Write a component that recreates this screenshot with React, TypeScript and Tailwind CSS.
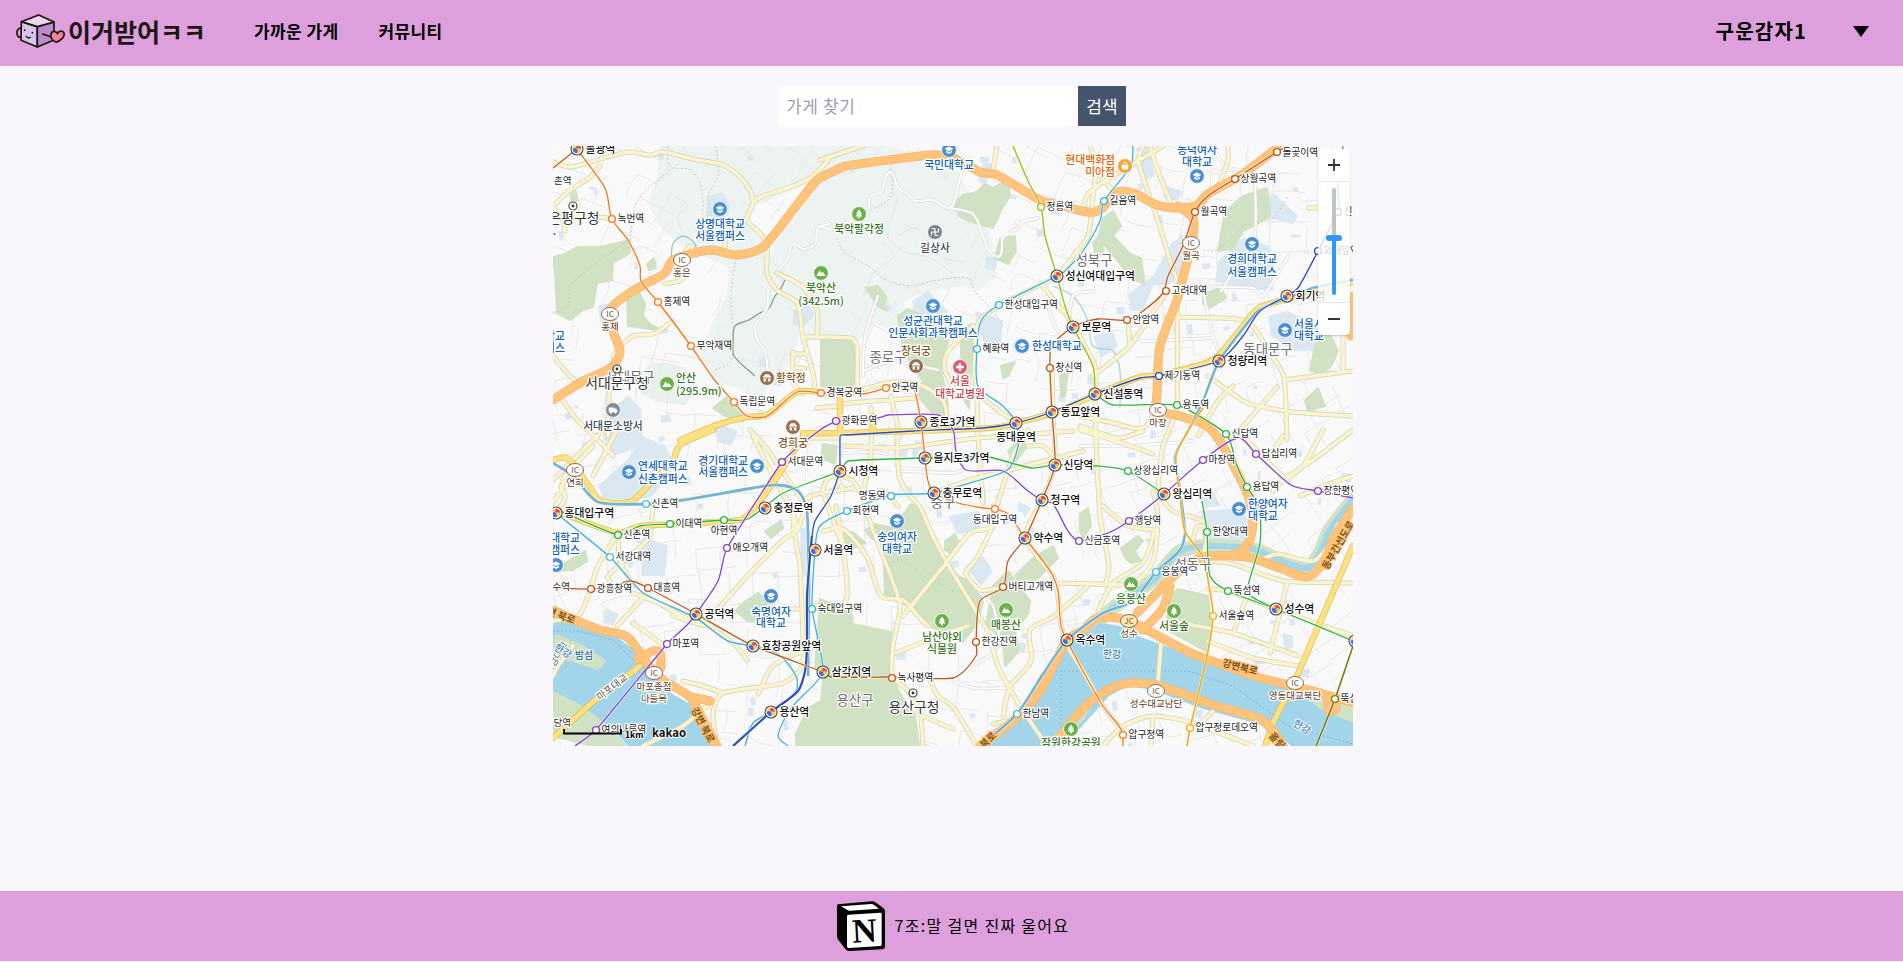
import React from 'react';

type Pt = [number, number];

const pts = (s: string): Pt[] => s.trim().split(/\s+/).map((p) => p.split(',').map(Number) as Pt);

/* Smooth curve that passes through every listed point; handles scale with the segment. */
const curve = (s: string): string => {
  const p = pts(s);
  const n = p.length;
  const dir = (i: number): Pt => {
    const a = p[Math.max(0, i - 1)];
    const b = p[Math.min(n - 1, i + 1)];
    const l = Math.hypot(b[0] - a[0], b[1] - a[1]) || 1;
    return [(b[0] - a[0]) / l, (b[1] - a[1]) / l];
  };
  let d = `M${p[0][0]} ${p[0][1]}`;
  for (let i = 0; i < n - 1; i++) {
    const b = p[i];
    const c = p[i + 1];
    const k = Math.min(9, Math.hypot(c[0] - b[0], c[1] - b[1]) * 0.28);
    const u = dir(i);
    const v = dir(i + 1);
    d += `C${(b[0] + u[0] * k).toFixed(1)} ${(b[1] + u[1] * k).toFixed(1)} ${(c[0] - v[0] * k).toFixed(1)} ${(c[1] - v[1] * k).toFixed(1)} ${c[0]} ${c[1]}`;
  }
  return d;
};

const MOUNTAINS = [
  '112,0 160,0 185,25 198,40 200,58 190,70 205,95 214,130 235,155 245,180 238,205 228,222 215,230 205,250 190,240 165,232 150,210 160,185 178,150 180,120 160,108 148,100 128,95 112,80 100,60 108,30',
  '165,0 310,0 380,14 400,26 412,48 408,62 428,72 436,100 428,120 440,128 425,140 412,136 395,138 360,146 345,156 352,172 335,178 320,172 305,190 280,190 258,186 248,158 218,120 225,100 255,60 275,30 250,35 205,55 195,30',
  '88,235 98,222 112,220 130,225 140,240 130,255 105,252 92,245',
];

const PARKS = [
  '0,111 12,108 24,101 47,101 60,98 77,94 77,107 60,117 59,134 44,137 40,161 30,164 17,174 4,167 2,127',
  '74,150 82,140 86,146 92,158 90,170 97,178 108,184 90,182 75,180',
  '18,47 23,45 25,55 18,54',
  '94,118 101,112 103,122 96,124',
  '268,194 298,192 303,200 302,225 300,246 268,240',
  '345,170 355,163 385,176 395,195 388,225 394,250 395,270 380,268 365,250 370,235 350,205',
  '402,57 410,49 424,46 432,38 440,42 455,34 457,50 448,64 440,82 415,75 406,70',
  '447,93 462,90 463,105 455,118 442,112',
  '312,142 325,140 334,152 330,160 335,165 325,160',
  '672,66 690,50 714,42 717,70 704,78 690,85 680,103 665,105',
  '545,92 550,72 560,65 568,80 560,90 577,108 588,112 592,138 577,132 565,115',
  '650,148 668,142 673,152 657,162 650,158',
  '762,200 775,185 785,205 778,220 770,227 757,225',
  '752,255 765,242 772,260 755,265',
  '330,400 318,392 312,384 322,378 340,382 358,358 368,362 375,385 390,410 405,430 423,438 430,456 424,478 410,496 400,490 380,482 360,462 332,450',
  '267,453 288,462 297,457 300,478 338,486 336,526 350,552 362,568 366,600 243,600 243,588 255,562 268,555 270,535 262,520',
  '440,440 455,425 466,440 477,455 475,468 462,485 466,505 452,520 450,495 433,478',
  '462,430 480,412 500,400 505,412 485,432 468,440',
  '182,465 190,457 205,447 216,455 222,465 212,477 195,475',
  '618,448 625,443 655,450 659,485 655,507 635,495 612,483',
  '568,402 585,390 590,395 582,405 588,415 578,417 572,412',
  '527,368 535,362 538,380 530,392 527,385',
  '160,262 175,250 190,268 190,275 172,270',
  '392,395 402,388 408,400 398,408 392,404',
  '407,185 418,178 420,190 416,262 410,252',
  '448,220 462,216 455,230 450,232',
  '507,230 515,225 512,250 508,250',
  '0,425 20,412 32,405 34,415 20,424',
  '212,385 228,375 230,382 218,392',
  '455,305 470,290 473,302 460,318',
  '540,97 548,88 550,106 543,112',
  '283,388 300,386 312,397 300,402',
  '0,555 30,565 55,585 70,600 40,600 0,590',
  '270,298 284,300 282,318 268,312',
];

const CAMPUSES = [
  '155,50 170,46 178,62 168,78 152,70',
  '45,160 57,157 66,168 62,180 48,178',
  '240,165 255,158 262,168 250,182 240,178',
  '60,262 75,250 88,262 90,300 60,310 50,290',
  '76,312 90,290 112,300 122,320 100,350 80,355 50,352 45,340',
  '359,155 375,145 395,165 385,175 362,172',
  '422,165 440,170 450,175 447,205 432,202 425,180',
  '700,50 722,48 745,70 740,78 715,72',
  '665,115 690,92 717,100 720,145 680,142 662,135',
  '620,95 633,92 632,120 618,138 600,140 590,165 577,165 575,148 600,130',
  '715,170 735,165 765,180 770,205 740,205 718,190',
  '430,15 440,18 432,40 425,35',
  '540,190 560,186 565,200 548,212',
  '648,365 690,362 700,385 690,398 650,402',
  '395,370 425,365 432,372 425,385 405,388',
  '90,390 115,400 112,430 88,430',
  '247,382 256,382 256,430 248,430',
  '583,2 596,0 602,30 592,35',
  '612,40 630,45 625,55 610,52',
  '160,275 185,285 178,300 165,296',
  '52,462 66,468 60,480 50,476',
  '412,420 430,410 440,425 428,440',
  '500,60 510,58 508,70 498,68',
  '433,110 445,112 442,125 432,122',
  '645,345 660,345 668,360 650,362',
  '730,487 740,490 740,502 731,502',
  '465,355 478,362 472,372',
];

const MINOR = [
  '267,80 280,84 290,78 305,72 315,66 317,50 328,46 337,26 345,42 355,48 362,55 380,54 397,62 405,40 410,20',
  '397,62 420,68 430,90 436,105 447,110 450,92 462,84 470,76 485,72',
  '224,127 235,112 240,98 250,103 262,98 265,82 277,78',
  '224,127 215,145 215,160 210,168 202,180 205,195 212,205 215,225',
  '660,0 672,20 700,30 702,90 690,110 668,145',
  '630,140 700,142 710,150 735,110',
  '650,145 660,190 665,205',
  '310,225 340,215 385,224',
  '310,230 312,190 325,150',
  '425,445 440,460 445,500 420,520',
  '580,190 590,195 660,192',
  '490,145 510,190 520,150 540,145',
  '400,535 420,542 455,542',
  '527,300 575,300 640,295',
  '290,307 320,306 335,308', '345,325 400,327 410,324',
];

const PALE = [
  '0,16 17,21 34,17 54,11 77,6 97,9 110,6 144,14 170,19 187,31 197,44 200,57 194,74 204,84 214,97 214,127 224,144 244,157 250,191 260,227 262,244',
  '200,55 210,50 240,40 260,30 277,12',
  '0,60 17,44 37,31 47,20', '0,67 54,72', '0,60 10,75 12,85',
  '224,127 250,141 264,164 264,191',
  '250,191 298,192 304,200 304,245',
  '240,208 252,208', '252,222 240,222', '240,206 240,236 250,248',
  '60,221 62,207 80,190 100,188 120,175',
  '62,215 56,250 55,290', '0,210 15,228 28,240', '8,252 25,275 45,294 60,310',
  '120,118 130,132 112,138', '130,110 137,100 142,108', '172,102 173,85 180,75 194,74',
  '0,334 20,314 50,284', '0,356 8,345 12,330 40,300', '64,284 40,330',
  '3,367 12,352 8,340', '65,387 67,414 80,440', '65,387 45,420 35,450 25,470 0,475',
  '60,440 55,430 95,393 100,360', '64,480 97,444', '80,477 112,500',
  '80,447 105,457 130,471 157,481 184,501 194,514',
  '143,468 157,480 120,470',
  '164,464 197,427 230,394 244,384 256,350',
  '197,284 215,304 244,347 254,361',
  '200,290 225,340 240,365 244,384',
  '164,600 160,567 170,547 230,537 250,517 247,420 240,370 258,350 300,342',
  '170,547 150,540 130,535', '205,548 220,520 250,505',
  '90,600 130,580 157,557', '20,500 5,520 0,530',
  '344,284 346,330 357,350 367,361 380,390 394,417 434,484 445,520 467,560 494,600',
  '319,284 317,317 310,350 320,384 347,457 340,500 340,530 355,545 367,567 370,600',
  '350,470 390,421 417,387 440,380 440,360',
  '412,427 427,444 450,441', '440,380 425,410 412,427',
  '424,245 425,290 430,357', '475,284 460,310 450,340 444,360',
  '499,222 500,270 502,319 489,354 472,392 500,430 505,450 508,480 514,494',
  '503,437 547,438 580,437 600,415 605,370 600,345',
  '534,441 500,471 477,484 478,515 457,541 450,570',
  '377,534 385,550 400,561 424,600', '400,583 370,570', '343,507 380,492 415,480',
  '270,385 290,383 314,411 328,450 350,454 365,470 375,480',
  '283,360 290,400 293,455 260,460', '240,463 262,463',
  '290,342 280,330 270,345 290,400',
  '310,350 330,345 345,360', '290,330 300,335 310,350',
  '290,300 345,302 424,292 520,285',
  '527,284 560,294 600,308', '252,292 285,292',
  '264,262 285,260', '287,258 320,255 365,252', '304,245 340,236 370,240 390,255 395,275',
  '453,325 530,305', '381,347 420,333 453,325', '475,300 490,300 500,310',
  '590,0 585,15 607,81 617,115 624,138 624,262 610,300 606,345 620,365 650,375 655,386',
  '530,64 535,48 560,30 610,0', '597,0 605,25 620,62', '537,0 548,30 560,45',
  '675,0 675,15 665,40', '755,62 772,62',
  '613,171 670,172 697,177 715,205 731,231 734,294',
  '731,234 800,225', '655,230 694,257 740,266 800,270', '790,180 790,225',
  '540,230 577,200 613,147', '577,200 575,175', '542,248 543,295 547,370 556,420 553,437',
  '724,241 690,280 665,300', '645,290 665,255 680,240', '527,270 560,277 590,282 604,262',
  '527,280 565,292 590,285', '550,360 575,380 602,384',
  '800,284 760,314 730,334 720,345', '690,290 724,325 735,335', '770,284 750,320 730,335',
  '717,310 730,290', '747,350 770,340 800,330',
  '617,475 680,487 745,510', '655,495 700,512 745,520',
  '734,437 717,507', '694,450 680,488', '655,443 675,445 723,463 800,490',
  '712,412 725,408 760,415 775,400 785,378', '650,411 654,386 645,380 640,395',
  '655,415 680,418 730,435 800,437', '602,384 590,417 560,437 545,465',
  '608,498 605,535', '550,600 570,580 600,570 640,577 700,600', '600,570 598,600',
  '444,0 440,24', '545,10 540,50 535,90 520,110 504,130 446,159',
  '267,14 310,0', '487,137 517,174 542,220 542,248', '420,180 394,207 392,225 400,240',
  '338,250 347,290', '318,262 318,284', '446,159 424,180 424,245 463,277',
  '510,494 530,525 550,560 569,585', '650,575 660,565', '440,578 454,575',
];

const YELLOW = [
  '127,294 164,279 194,271 214,269 244,246 268,246',
  '0,314 14,312 34,337 47,354 77,356 94,341 120,314 127,299 160,284',
  '250,287 285,287 394,284 447,281 500,267 547,247 587,231 607,229 660,214 690,180 707,161 760,147 800,136',
  '0,364 64,387 87,380 187,374 210,351 237,311 252,288',
  '0,592 40,556 87,520', '287,250 287,285', '320,270 320,286',
  '800,400 744,530 720,577 712,600',
];

const ORANGE = [
  '0,254 30,235 57,222 67,207 60,185 57,164 75,148 94,137 112,127 120,114 157,104 184,109 210,101 240,64 264,34 277,27 293,20 377,9 400,12 427,26 444,29 487,54 510,60 534,66 547,64 564,46 580,47 604,59 624,62 646,60',
  '641,64 655,48 690,28 727,0',
  '625,60 640,72 640,90 637,104 624,154 607,200 604,247 605,264 627,270 654,280 670,300 694,347 700,377 694,400 680,409',
  '584,467 624,427 650,411 694,411 727,422 754,431 770,417 780,394 800,362',
  '427,600 450,583 473,563 490,540 502,517 514,494 530,484 544,472 574,474 594,484 640,508 704,531 767,547 800,557',
  '500,600 525,568 545,550 570,538 604,539 660,559 707,573 724,590 730,600',
  '0,464 22,474 47,484 74,491 94,517 110,534 137,551 150,574 164,600',
  '590,484 610,462 617,440', '85,513 105,505 108,522', '138,551 157,555',
  '775,555 783,562 776,565 775,555', '800,150 798,190',
];

const LINES: { c: string; w?: number; d: string }[] = [
  { c: '#78b4d2', w: 2.8, d: '0,317 20,330 45,356 93,358 130,354 200,342 225,339 245,345 254,365 256,440 255,530' },
  { c: '#4fb4da', w: 1.5, d: '3,367 57,411 90,447 143,472 175,495 200,500 225,508 243,530 243,545 218,566 200,577 192,600' },
  { c: '#6fb3d2', w: 2.4, d: '428,600 464,568 490,528 514,494 550,467 580,455 603,426 627,404 632,385 625,330 622,310 635,285 650,255 666,215 705,165 740,150 760,142 800,134' },
  { c: '#2fa6dc', d: '790,0 785,40 787,66' },
  { c: '#2a4db0', d: '287,325 287,292 288,289 293,289 360,285 430,282 463,277 499,266 542,248 587,232 606,230 666,215 690,190 707,165 734,150 745,142 765,105 785,66' },
  { c: '#2a4db0', d: '287,325 278,350 262,375 259,390' },
  { c: '#2f50b4', w: 2.2, d: '259,390 257,410 254,450 254,500 252,525 245,545 218,566 180,600' },
  { c: '#3cb1de', d: '580,0 578,20 551,55 547,75 530,105 512,125 504,130 446,159 428,175 424,203 425,240 450,260 463,277 465,300 453,325 381,347 338,349 294,365 267,380 262,404 259,463 270,526 240,560 225,590 235,600' },
  { c: '#2fb344', d: '0,362 65,389 87,380 117,378 171,374 195,373 230,347 287,325 295,315 372,312 435,311 478,322 502,319 545,320 575,325 611,348' },
  { c: '#2fb344', d: '649,355 654,386 657,430 675,445 723,463 800,495' },
  { c: '#2fb344', d: '542,248 560,259 624,259 673,288 684,320 694,341 706,360 707,397 695,440 698,450 723,463' },
  { c: '#8443d0', d: '283,275 267,284 229,316 174,402 165,435 143,468 135,478 114,498 43,584 22,600' },
  { c: '#8443d0', d: '283,275 325,272 335,269 385,269 400,284 403,305 413,324 450,325 475,345 489,354 500,358 515,385 526,395 555,387 576,375 611,348 650,314 685,292 703,308 738,339 765,345 800,352' },
  { c: '#c2571a', d: '0,22 24,3' },
  { c: '#c2571a', d: '0,442 38,443 60,440 78,435 95,442 143,468 200,500 270,526 278,531 339,531 400,532 423,510 423,496 427,455 450,441 455,415 472,392 489,354 502,319 499,266 497,222 499,200 520,181 545,173 574,174 590,165 610,147 615,130 630,100 642,66 655,50 682,33 724,6 735,0' },
  { c: '#f5751a', d: '24,3 52,42 59,73 75,94 87,120 88,135 105,156 138,200 160,232 181,256 194,270 214,270 244,246 268,247 310,248 333,242 350,236 360,240 368,276 372,312 375,335 381,347 405,357 430,362 442,363 455,368 472,392 490,415 500,430 505,445 508,480 514,494 530,525 550,560 569,585 570,600' },
  { c: '#a5bd1d', w: 1.4, d: '460,0 475,35 488,61 492,90 504,130 512,160 520,181 540,220 542,248' },
  { c: '#f7ad12', w: 1.6, d: '650,262 635,285 623,310 627,350 632,385 650,411 656,440 660,470 653,515 637,582 634,600' },
  { c: '#7b7a12', w: 1.6, d: '800,500 782,553 763,600' },
];

const OR = '#ff7a1c', GR = '#2fb344', NV = '#2a4db0', CY = '#3cb1de', PU = '#8443d0', BR = '#c2571a', TL = '#54bdd2', YE = '#f7ad12', LM = '#a5bd1d', OL = '#7b7a12';

type Stop = [number, number, string, string, ('below' | 'left')?];
const STOPS: Stop[] = [
  [59, 73, '녹번역', OR], [105, 156, '홍제역', OR], [138, 200, '무악재역', OR], [181, 256, '독립문역', OR], [268, 247, '경복궁역', OR],
  [333, 242, '안국역', OR], [488, 61, '정릉역', LM], [446, 159, '한성대입구역', CY], [424, 203, '혜화역', CY], [497, 222, '창신역', BR],
  [283, 275, '광화문역', PU], [551, 55, '길음역', CY], [642, 66, '월곡역', BR], [682, 33, '상월곡역', BR], [724, 6, '돌곶이역', BR],
  [613, 145, '고려대역', BR], [574, 174, '안암역', BR], [606, 230, '제기동역', NV], [624, 259, '용두역', GR], [673, 288, '신답역', GR],
  [765, 105, '외대앞역', NV], [785, 66, '신이문역', NV], [229, 316, '서대문역', PU], [93, 358, '신촌역', TL], [65, 389, '신촌역', GR],
  [117, 378, '이대역', GR], [171, 374, '아현역', GR, 'below'], [174, 402, '애오개역', PU], [57, 411, '서강대역', TL], [38, 443, '광흥창역', BR],
  [95, 442, '대흥역', BR], [114, 498, '마포역', PU], [43, 584, '여의나루역', PU], [259, 463, '숙대입구역', CY], [338, 350, '명동역', CY, 'left'],
  [294, 365, '회현역', CY], [442, 363, '동대입구역', OR, 'below'], [450, 441, '버티고개역', BR], [423, 496, '한강진역', BR], [339, 532, '녹사평역', BR],
  [526, 395, '신금호역', PU], [464, 568, '한남역', TL], [575, 325, '상왕십리역', GR], [650, 314, '마장역', PU], [703, 308, '답십리역', PU],
  [694, 341, '용답역', GR], [765, 345, '장한평역', PU], [576, 375, '행당역', PU], [654, 386, '한양대역', GR], [603, 426, '응봉역', TL],
  [675, 445, '뚝섬역', GR], [660, 470, '서울숲역', YE], [570, 589, '압구정역', OR], [637, 582, '압구정로데오역', YE], [782, 553, '뚝섬유원지역', OL],
];

const HUBS: [number, number, string, 'below'?][] = [
  [24, 3, '불광역'], [504, 130, '성신여대입구역'], [520, 181, '보문역'], [542, 248, '신설동역'], [499, 266, '동묘앞역'], [463, 277, '동대문역', 'below'],
  [368, 276, '종로3가역'], [734, 150, '회기역'], [666, 215, '청량리역'], [3, 367, '홍대입구역'], [212, 362, '충정로역'], [262, 404, '서울역'],
  [143, 468, '공덕역'], [200, 500, '효창공원앞역'], [270, 526, '삼각지역'], [218, 566, '용산역'], [287, 325, '시청역'], [372, 312, '을지로3가역'],
  [381, 347, '충무로역'], [502, 319, '신당역'], [489, 354, '청구역'], [472, 392, '약수역'], [514, 494, '옥수역'], [611, 348, '왕십리역'], [723, 463, '성수역'],
  [802, 495, ''],
];

type Kind = 'edu' | 'tree' | 'peak' | 'palace' | 'hospital' | 'temple' | 'fire' | 'shop';
const POI_FILL: Record<Kind, string> = {
  edu: '#4a8fd0', tree: '#6bb04a', peak: '#6bb04a', palace: '#94704f', hospital: '#d9606e', temple: '#74838f', fire: '#7d8b97', shop: '#f8a32a',
};
const POIS: [number, number, Kind][] = [
  [167, 63, 'edu'], [396, 4, 'edu'], [380, 160, 'edu'], [469, 200, 'edu'], [644, 30, 'edu'], [699, 98, 'edu'], [732, 184, 'edu'], [76, 326, 'edu'],
  [204, 320, 'edu'], [3, 419, 'edu'], [218, 450, 'edu'], [344, 375, 'edu'], [686, 363, 'edu'], [306, 68, 'tree'], [268, 127, 'peak'], [114, 238, 'peak'],
  [389, 475, 'tree'], [453, 464, 'peak'], [518, 583, 'tree'], [578, 438, 'peak'], [621, 465, 'tree'], [214, 232, 'palace'], [240, 281, 'palace'],
  [363, 220, 'palace'], [407, 221, 'hospital'], [382, 86, 'temple'], [60, 264, 'fire'], [572, 20, 'shop'],
];

const EDU = '#1462b0', PARK = '#38751f', PAL = '#87592c', MED = '#c2434f', GY = '#3e4a54', SHOP = '#e0660a';
type Anchor = 'start' | 'middle' | 'end';
const NAMES: [number, number, string, string, Anchor][] = [
  [167, 78, '상명대학교', EDU, 'middle'], [167, 90, '서울캠퍼스', EDU, 'middle'], [396, 19, '국민대학교', EDU, 'middle'],
  [380, 175, '성균관대학교', EDU, 'middle'], [380, 187, '인문사회과학캠퍼스', EDU, 'middle'], [479, 200, '한성대학교', EDU, 'start'],
  [644, 4, '동덕여자', EDU, 'middle'], [644, 16, '대학교', EDU, 'middle'], [699, 113, '경희대학교', EDU, 'middle'], [699, 126, '서울캠퍼스', EDU, 'middle'],
  [741, 178, '서울시립', EDU, 'start'], [741, 190, '대학교', EDU, 'start'], [85, 320, '연세대학교', EDU, 'start'], [85, 333, '신촌캠퍼스', EDU, 'start'],
  [195, 315, '경기대학교', EDU, 'end'], [195, 326, '서울캠퍼스', EDU, 'end'], [12, 190, '대학교', EDU, 'end'], [12, 202, '캠퍼스', EDU, 'end'],
  [27, 392, '대학교', EDU, 'end'], [27, 404, '캠퍼스', EDU, 'end'], [218, 466, '숙명여자', EDU, 'middle'], [218, 477, '대학교', EDU, 'middle'],
  [344, 391, '숭의여자', EDU, 'middle'], [344, 403, '대학교', EDU, 'middle'], [695, 358, '한양여자', EDU, 'start'], [695, 370, '대학교', EDU, 'start'],
  [306, 83, '북악팔각정', PARK, 'middle'], [268, 142, '북악산', PARK, 'middle'], [268, 155, '(342.5m)', PARK, 'middle'],
  [123, 232, '안산', PARK, 'start'], [123, 245, '(295.9m)', PARK, 'start'], [389, 491, '남산야외', PARK, 'middle'], [389, 503, '식물원', PARK, 'middle'],
  [453, 479, '매봉산', PARK, 'middle'], [518, 597, '잠원한강공원', PARK, 'middle'], [578, 453, '응봉산', PARK, 'middle'], [621, 480, '서울숲', PARK, 'middle'],
  [223, 232, '황학정', PAL, 'start'], [240, 297, '경희궁', PAL, 'middle'], [363, 205, '창덕궁', PAL, 'middle'],
  [407, 235, '서울', MED, 'middle'], [407, 248, '대학교병원', MED, 'middle'], [382, 102, '길상사', GY, 'middle'], [60, 280, '서대문소방서', GY, 'middle'],
  [562, 14, '현대백화점', SHOP, 'end'], [562, 26, '미아점', SHOP, 'end'],
];

const DISTRICTS: [number, number, string][] = [
  [541, 114, '성북구'], [715, 203, '동대문구'], [335, 211, '종로구'], [390, 356, '중구'], [640, 418, '성동구'], [302, 554, '용산구'], [77, 231, '서대문구'],
];

const OFFICES: [number, number, number, number, string][] = [
  [20, 60, 21, 72, '은평구청'], [64, 223, 64, 237, '서대문구청'], [360, 547, 361, 561, '용산구청'],
];

const RAMPS: [number, number, string, string[]][] = [
  [129, 114, 'IC', ['홍은']], [57, 168, 'IC', ['홍제']], [638, 97, 'IC', ['월곡']], [605, 264, 'IC', ['마장']], [22, 324, 'IC', ['연희']],
  [101, 527, 'IC', ['마포종점', '나들목']], [576, 475, 'JC', ['성수']], [603, 545, 'IC', ['성수대교남단']], [742, 537, 'IC', ['영동대교북단']],
];

const ROADNAMES: [number, number, number, string, string, string][] = [
  [687, 521, 14, '강변북로', '#7d5418', '#ffc37a'], [4, 468, 20, '강변 북로', '#7d5418', '#ffc37a'], [150, 579, 62, '강변 북로', '#7d5418', '#ffc37a'],
  [785, 399, -60, '동부간선도로', '#7d5418', '#ffc37a'], [435, 594, -45, '북로', '#7d5418', '#ffc37a'], [727, 598, 50, '올림픽', '#7d5418', '#ffc37a'],
  [59, 541, -38, '마포대교', '#555555', '#ffffff'], [3, 512, -60, '서강대교', '#666666', '#ffffff'],
  [559, 508, 0, '한강', '#2f7096', '#e3f3fa'], [749, 581, 30, '한강', '#2f7096', '#e3f3fa'], [31, 509, 0, '밤섬', '#1f5878', '#e3f3fa'], [10, 505, 30, '한강', '#2f7096', '#e3f3fa'],
];

/* Back streets: short jittered segments on a tilted lattice, from a fixed seed. */
const buildStreets = (): string => {
  let seed = 11;
  const rnd = () => {
    seed = (seed * 16807) % 2147483647;
    return seed / 2147483647;
  };
  let d = '';
  for (let y = -10; y < 620; y += 27) {
    for (let x = -10; x < 820; x += 29) {
      const a = (Math.sin(x / 170) + Math.cos(y / 130)) * 0.35;
      const px = x + rnd() * 12;
      const py = y + rnd() * 12;
      const l = 16 + rnd() * 24;
      const bend = rnd() * 8 - 4;
      if (rnd() > 0.35) d += `M${px.toFixed(1)} ${py.toFixed(1)}q${(Math.cos(a) * l * 0.5).toFixed(1)} ${(Math.sin(a) * l * 0.5 + bend).toFixed(1)} ${(Math.cos(a) * l).toFixed(1)} ${(Math.sin(a) * l).toFixed(1)}`;
      if (rnd() > 0.35) d += `M${px.toFixed(1)} ${py.toFixed(1)}q${(-Math.sin(a) * l * 0.5 + bend).toFixed(1)} ${(Math.cos(a) * l * 0.5).toFixed(1)} ${(-Math.sin(a) * l).toFixed(1)} ${(Math.cos(a) * l).toFixed(1)}`;
    }
  }
  return d;
};
const STREETS = buildStreets();

const buildBlocks = (): string => {
  let seed = 77;
  const rnd = () => {
    seed = (seed * 16807) % 2147483647;
    return seed / 2147483647;
  };
  let d = '';
  for (let i = 0; i < 150; i++) {
    const x = rnd() * 800;
    const y = rnd() * 600;
    const w = 3 + rnd() * 7;
    const h = 3 + rnd() * 7;
    const k = rnd() * 4 - 2;
    d += `M${x.toFixed(1)} ${y.toFixed(1)}l${w.toFixed(1)} ${k.toFixed(1)}l${(-k).toFixed(1)} ${h.toFixed(1)}l${(-w).toFixed(1)} ${(-k).toFixed(1)}z`;
  }
  return d;
};
const BLOCKS = buildBlocks();

interface LabelProps { x: number; y: number; t: string; size: number; fill: string; anchor?: Anchor; weight?: number; halo?: string; rotate?: number; hw?: number }
const Label = ({ x, y, t, size, fill, anchor = 'start', weight = 400, halo = '#ffffff', rotate = 0, hw = 2.4 }: LabelProps) => (
  <text
    x={x}
    y={y + size * 0.36}
    fontSize={size}
    fontWeight={weight}
    fill={fill}
    textAnchor={anchor}
    stroke={halo}
    strokeWidth={hw}
    strokeLinejoin="round"
    paintOrder="stroke"
    transform={rotate ? `rotate(${rotate} ${x} ${y})` : undefined}
  >
    {t}
  </text>
);

const Hub = ({ x, y }: { x: number; y: number }) => (
  <g transform={`translate(${x} ${y})`}>
    <circle r="6" fill="#fff" stroke="#4a4a4a" strokeWidth="1.1" />
    <path d="M-4.3-.6A4.3 4.3 0 0 1-.4-4.3L0 0Q-2-1.6-4.3-.6z" fill="#f6cf45" />
    <path d="M-.4-4.3A4.3 4.3 0 0 1 4.3.4Q2-1.4 0 0-1.6-2-.4-4.3z" fill="#ea4a42" />
    <path d="M4.3.4A4.3 4.3 0 0 1 .4 4.3Q1.4 2 0 0 2-1.4 4.3.4z" fill="#f6cf45" />
    <path d="M.4 4.3A4.3 4.3 0 0 1-4.3-.6Q-2-1.6 0 0 1.4 2 .4 4.3z" fill="#3f6de0" />
  </g>
);

const PoiGlyph = ({ kind }: { kind: Kind }) => {
  switch (kind) {
    case 'edu':
      return <><path d="M0-3.6L4.4-1.2 0 1.2-4.4-1.2z" fill="#fff" /><path d="M-2.9.6L0 2.2 2.9.6V2.6L0 4-2.9 2.6z" fill="#fff" /></>;
    case 'tree':
      return <path d="M0-4.4L3 0H1.8L3.4 2.4H.7V4.4H-.7V2.4H-3.4L-1.8 0H-3z" fill="#fff" />;
    case 'peak':
      return <path d="M-4.6 3L-1.4-2.8.4.2 1.6-1.4 4.6 3z" fill="#fff" />;
    case 'palace':
      return <><path d="M-4.2-1.6Q-2.6-2-2-3.8H2Q2.6-2 4.2-1.6L3.4-.4V3.6H-3.4V-.4z" fill="#fff" /><path d="M-1.2 3.6V1.4Q0 0 1.2 1.4V3.6zM-2.6-.4H2.6V.4H-2.6z" fill="#94704f" /></>;
    case 'hospital':
      return <path d="M-1.2-3.8H1.2V-1.2H3.8V1.2H1.2V3.8H-1.2V1.2H-3.8V-1.2H-1.2z" fill="#fff" />;
    case 'temple':
      return <path d="M0-3.5V3.5M-3.5 0H3.5M0-3.5H-3.5M3.5 0V-3.5M0 3.5H3.5M-3.5 0V3.5" stroke="#fff" strokeWidth="1.2" fill="none" />;
    case 'fire':
      return <><path d="M-4.2-2.6H1.4V-1.4H3.2L4.4.6V2.2H-4.2z" fill="#fff" /><circle cx="-2" cy="2.6" r="1.1" fill="#fff" /><circle cx="2.4" cy="2.6" r="1.1" fill="#fff" /></>;
    default:
      return <><path d="M-3.6-1H3.6L3 3.4H-3z" fill="#fff" /><path d="M-1.9-1Q-1.9-3.8 0-3.8T1.9-1" stroke="#fff" strokeWidth="1" fill="none" /></>;
  }
};

const Roads = ({ list, fill, edge, w }: { list: string[]; fill: string; edge: string; w: number }) => {
  const d = list.map(curve).join('');
  return (
    <g fill="none" strokeLinecap="round" strokeLinejoin="round">
      <path d={d} stroke={edge} strokeWidth={w + 1.4} />
      <path d={d} stroke={fill} strokeWidth={w} />
    </g>
  );
};

const CityMap = () => (
  <svg width="800" height="600" viewBox="0 0 800 600" className="block font-['Noto_Sans_CJK_KR','Noto_Sans',sans-serif]">
    <rect width="800" height="600" fill="#f9f9f9" />
    {MOUNTAINS.map((m, i) => <polygon key={i} points={m} fill={i === 2 ? '#e9f1ea' : '#edf3f0'} stroke={i === 2 ? '#e9f1ea' : '#edf3f0'} strokeWidth="8" strokeLinejoin="round" />)}
    <path d={STREETS} stroke="#e9e9ea" strokeWidth="1" fill="none" />
    <path d={BLOCKS} fill="#dce8f1" />
    <polygon points="240,150 225,105 262,60 285,30 380,20 405,60 420,110 400,130 350,140 310,120 290,180 262,175" fill="#edf3f0" />
    <polygon points="120,5 160,5 190,40 185,70 208,110 235,160 230,205 180,215 165,200 182,150 180,118 150,95 118,60" fill="#edf3f0" />
    {CAMPUSES.map((m, i) => <polygon key={i} points={m} fill="#dbe8f1" />)}
    {PARKS.map((m, i) => <polygon key={i} points={m} fill="#d0e2c3" stroke="#d0e2c3" strokeWidth="2" strokeLinejoin="round" />)}
    <g fill="none" strokeWidth="1" stroke="#e2e5e4">
      <path d={curve('130,88 125,70 135,60 120,50')} />
      <path d={curve('345,52 335,90 350,105 378,112 400,128')} />
      <path d={curve('310,150 322,125 340,110 330,95')} />
      <path d={curve('345,90 362,82 375,95 390,112 410,116')} />
    </g>
    <g fill="none" strokeDasharray="2 2" strokeWidth="1">
      <path d={curve('77,94 82,60 92,45 110,30 125,18')} stroke="#c9cdb9" />
      <path d={curve('0,167 15,160 17,140 40,120 60,105 77,94')} stroke="#c3c9b3" />
      <path d={curve('183,112 178,150 180,185 178,215 160,225')} stroke="#c9cdb9" />
      <path d={curve('284,92 290,105 315,120 335,135 360,140 380,135 415,132 422,145 440,165 450,180')} stroke="#c9cdb9" />
      <path d={curve('337,10 338,50 310,68')} stroke="#c9cdb9" />
      <path d={curve('332,418 350,415 370,430 400,445')} stroke="#bccbb0" />
      <path d={curve('115,0 117,20 140,25 150,55 145,95')} stroke="#b9dcb9" />
      <path d={curve('163,0 165,30 155,50 158,70')} stroke="#b9dcb9" />
      <path d={curve('650,104 664,104 680,90 690,80 720,72 735,50')} stroke="#c9cdb9" />
    </g>
    <path d={curve('232,134 226,146 222,150 216,162 205,168 196,174 182,180 180,196 181,210 202,230')} fill="none" stroke="#7aa074" strokeWidth="1.2" />
    <path d={curve('118,113 120,98 130,90 142,98 143,110')} fill="none" stroke="#98c8dc" strokeWidth="1.4" />
    <path d={curve('500,140 520,150 535,175 540,200 560,205 567,225 567,262')} fill="none" stroke="#a9d2e0" strokeWidth="1.2" />

    <g fill="none" strokeLinecap="round">
      <path d={curve('527,494 560,462 603,432 627,405 660,400 700,403 727,414 754,422 766,408 776,385 800,353')} stroke="#d0e2c3" strokeWidth="14" />
      <path d={curve('510,502 527,486 560,462 603,432 627,405 660,400 700,403 727,414 754,422 766,408 776,385 800,353')} stroke="#a3d5ea" strokeWidth="6" />
    </g>
    <polygon points="0,466 35,478 60,488 80,503 100,530 115,545 140,560 155,580 168,600 75,600 60,584 30,562 0,553" fill="#a3d5ea" />
    <polygon points="0,545 30,560 58,582 74,600 50,600 25,582 0,570" fill="#d0e2c3" />
    <polygon points="3,489 30,500 52,515 45,523 20,515 0,508" fill="#d0e2c3" stroke="#d0e2c3" strokeWidth="2" strokeLinejoin="round" />
    <polygon points="428,600 460,572 482,550 500,520 512,500 527,492 547,477 567,480 585,490 640,510 660,517 705,530 760,552 800,570 800,600 738,600 722,585 705,578 650,563 600,544 575,540 556,550 540,568 520,590 505,600" fill="#a3d5ea" />
    <polygon points="545,550 530,562 490,600 502,600 530,575" fill="#d0e2c3" />
    <polygon points="570,482 567,474 585,478 600,490 580,487" fill="#d0e2c3" />
    <polygon points="745,540 770,552 800,562 800,577 765,562" fill="#d0e2c3" />
    <g fill="none" stroke="#7fb5cd" strokeDasharray="2 2">
      <path d="M0 485H25L60 494 88 522M508 598V525H635L680 540 735 580 800 598" />
    </g>

    <Roads list={MINOR} fill="#ffffff" edge="#dadada" w={2} />
    <Roads list={PALE} fill="#faf4cf" edge="#d6d1b4" w={3.6} />
    <Roads list={YELLOW} fill="#ffe180" edge="#d9c05a" w={4.8} />
    <Roads list={ORANGE} fill="#ffc37a" edge="#f3b572" w={7.6} />

    <g fill="none" strokeLinejoin="round">
      {LINES.map((l, i) => (
        <g key={i}>
          <path d={curve(l.d)} stroke="#ffffff" strokeOpacity="0.6" strokeWidth={(l.w ?? 1.3) + 1.4} />
          <path d={curve(l.d)} stroke={l.c} strokeWidth={l.w ?? 1.3} />
        </g>
      ))}
    </g>

    {DISTRICTS.map(([x, y, t]) => <Label key={t} x={x} y={y} t={t} size={13.4} fill="#6e6e6e" anchor="middle" />)}
    {ROADNAMES.map(([x, y, r, t, f, h], i) => <Label key={i} x={x} y={y} t={t} size={9.8} fill={f} halo={h} anchor="middle" rotate={r} weight={f === '#7d5418' ? 700 : 400} />)}
    {RAMPS.map(([x, y, k, t], i) => (
      <g key={i}>
        <ellipse cx={x} cy={y} rx="8.5" ry="6.5" fill={k === 'JC' ? '#fde9b0' : '#fff'} stroke="#8a6a52" strokeWidth="1" />
        <text x={x} y={y + 2.8} fontSize="8" fontWeight="500" fill="#8a6a52" textAnchor="middle">{k}</text>
        {t.map((n, j) => <Label key={n} x={x} y={y + (t.length > 1 ? 14 : 13) + j * 11.5} t={n} size={9.5} fill="#5a3a22" anchor="middle" />)}
      </g>
    ))}
    {STOPS.map(([x, y, t, c, pos], i) => (
      <g key={i}>
        <circle cx={x} cy={y} r="3.4" fill="#fff" stroke={c} strokeWidth="1.4" />
        <Label
          x={pos === 'below' ? x : pos === 'left' ? x - 5.5 : x + 5.5}
          y={pos === 'below' ? y + 10.5 : y}
          t={t}
          size={9.7}
          fill="#222222"
          anchor={pos === 'below' ? 'middle' : pos === 'left' ? 'end' : 'start'}
        />
      </g>
    ))}
    {HUBS.map(([x, y, t, pos], i) => (
      <g key={i}>
        <Hub x={x} y={y} />
        <Label x={pos ? x : x + 8.5} y={pos ? y + 14 : y + 0.5} t={t} size={10.8} fill="#111" weight={500} anchor={pos ? 'middle' : 'start'} />
      </g>
    ))}
    <Label x={1} y={35} t="촌역" size={9.5} fill="#2b2b2b" />
    <Label x={17} y={441} t="상수역" size={9.5} fill="#2b2b2b" anchor="end" />
    <Label x={18} y={577} t="당역" size={9.5} fill="#2b2b2b" anchor="end" />
    {OFFICES.map(([dx, dy, x, y, t]) => (
      <g key={t}>
        <circle cx={dx} cy={dy} r="4" fill="#fff" stroke="#444" strokeWidth="1.2" />
        <circle cx={dx} cy={dy} r="1.4" fill="#333" />
        <Label x={x} y={y} t={t} size={13.8} fill="#333" anchor="middle" />
      </g>
    ))}
    {POIS.map(([x, y, k], i) => (
      <g key={i} transform={`translate(${x} ${y})`}>
        <circle r="7.4" fill={POI_FILL[k]} stroke="#fff" strokeWidth="0.8" />
        <PoiGlyph kind={k} />
      </g>
    ))}
    {NAMES.map(([x, y, t, c, a], i) => <Label key={i} x={x} y={y} t={t} size={10.8} fill={c} anchor={a} weight={500} hw={2.6} />)}
    <circle cx="1.5" cy="88" r="1" fill="#e02020" />

    <path d="M11 583V587.5H68V583" fill="none" stroke="#000" strokeWidth="1.8" />
    <text x="72" y="592" fontSize="8.5" fontWeight="700" fill="#000" stroke="#fff" strokeWidth="1.5" paintOrder="stroke">1km</text>
    <text x="99" y="591" fontSize="11.4" fontWeight="700" fill="#111" stroke="#fff" strokeWidth="1.5" paintOrder="stroke">kakao</text>
  </svg>
);

const ZoomControl = () => (
  <div className="absolute left-[765px] top-[3px] flex w-8 flex-col overflow-hidden rounded-sm shadow-[0_1px_2px_rgba(0,0,0,0.2)]">
    <button aria-label="확대" className="flex h-8 items-center justify-center bg-white">
      <svg width="12" height="12" viewBox="0 0 12 12"><path d="M6 0V12M0 6H12" stroke="#333" strokeWidth="1.8" /></svg>
    </button>
    <div className="flex h-[122px] flex-col items-center border-y border-gray-200 bg-white/80 pb-[7px] pt-1.5">
      <span className="w-1 flex-1 rounded-t bg-[#c3c3c3]" />
      <span className="h-[6px] w-4 rounded-sm bg-[#3396ff]" />
      <span className="h-[54px] w-1 rounded-b bg-[#3396ff]" />
    </div>
    <button aria-label="축소" className="flex h-8 items-center justify-center bg-white">
      <svg width="12" height="12" viewBox="0 0 12 12"><path d="M0 6H12" stroke="#333" strokeWidth="1.8" /></svg>
    </button>
  </div>
);

const BrandMark = () => (
  <svg width="49" height="35" viewBox="0 0 147 105" fill="none" stroke="#1c1510" strokeWidth="5" strokeLinejoin="round" strokeLinecap="round">
    <path d="M16 42C5 42 2 52 3 60S10 71 16 69" />
    <path d="M16 23L64 38V99L15 79z" fill="#d8c3e6" />
    <path d="M64 38L114 24V78L64 99z" fill="#bb8aca" />
    <path d="M16 23L68 3 114 24 64 38z" fill="#ead6f0" />
    <path d="M80 60L104 68" />
    <path d="M121 85C106 78 102 67 106 57 111 49 120 51 124 59 129 49 140 49 144 57 147 69 137 78 121 85z" fill="#ee8299" />
    <path d="M26 48V49M49 56V57" strokeWidth="5" />
    <path d="M31 67Q37 75 43 70" strokeWidth="4" />
  </svg>
);

const NotionMark = () => (
  <svg width="48" height="50" viewBox="0 0 144 150">
    <path d="M3 10L104 1Q110 0 115 4L140 22Q144 26 144 31V138Q144 144 137 145L37 150Q31 150 27 146L4 117Q0 112 0 106V18Q0 11 3 10z" fill="#000" />
    <path d="M12 16L103 9Q107 9 110 11L126 23 39 29Q34 29 31 27z" fill="#fff" />
    <path d="M34 41Q30 41 30 46V136Q30 141 35 141L130 135Q134 135 134 130V39Q134 35 130 35z" fill="#fff" />
    <text x="82" y="123" textAnchor="middle" fontSize="102" fontWeight="700" fill="#000" className="font-['Liberation_Serif',serif]" transform="rotate(-3 82 90)">N</text>
  </svg>
);

export default function App() {
  return (
    <div className="flex h-[962px] flex-col bg-[#f9f7fb] font-['Noto_Sans_CJK_KR','Noto_Sans',sans-serif] text-black">
      <header className="flex h-[66px] shrink-0 items-center justify-between bg-[#dda0dd] pb-1 pl-4 pr-[34px]">
        <div className="flex items-center">
          <a className="flex w-[238px] items-center gap-[3px]">
            <BrandMark />
            <span className="text-[25px] font-bold leading-8 text-[#1c1510]">이거받어ㅋㅋ</span>
          </a>
          <nav className="flex gap-10 pb-px text-[17px] font-bold leading-6 tracking-[0.4px]">
            <a>가까운 가게</a>
            <a>커뮤니티</a>
          </nav>
        </div>
        <div className="flex items-center gap-[46px]">
          <span className="text-xl font-bold tracking-[1.2px]">구운감자1</span>
          <svg width="16" height="11" viewBox="0 0 16 11"><path d="M0 0H16L8 11z" fill="#000" /></svg>
        </div>
      </header>

      <main className="flex flex-1 flex-col items-center pt-5">
        <form className="flex h-10 pl-px">
          <input className="w-[300px] bg-white px-2 text-[17px] tracking-[0.6px] placeholder:text-gray-400" placeholder="가게 찾기" />
          <button type="button" className="w-12 bg-slate-600 text-[17px] text-white">검색</button>
        </form>
        <div className="mt-5 pl-[3px]">
          <div className="relative h-[600px] w-[800px] overflow-hidden">
            <CityMap />
            <ZoomControl />
          </div>
        </div>
      </main>

      <footer className="mb-px flex h-[70px] shrink-0 items-center justify-center gap-2.5 bg-[#dda0dd] pl-[3px]">
        <NotionMark />
        <span className="pb-0.5 text-base tracking-[1.3px]">7조:말 걸면 진짜 울어요</span>
      </footer>
    </div>
  );
}
